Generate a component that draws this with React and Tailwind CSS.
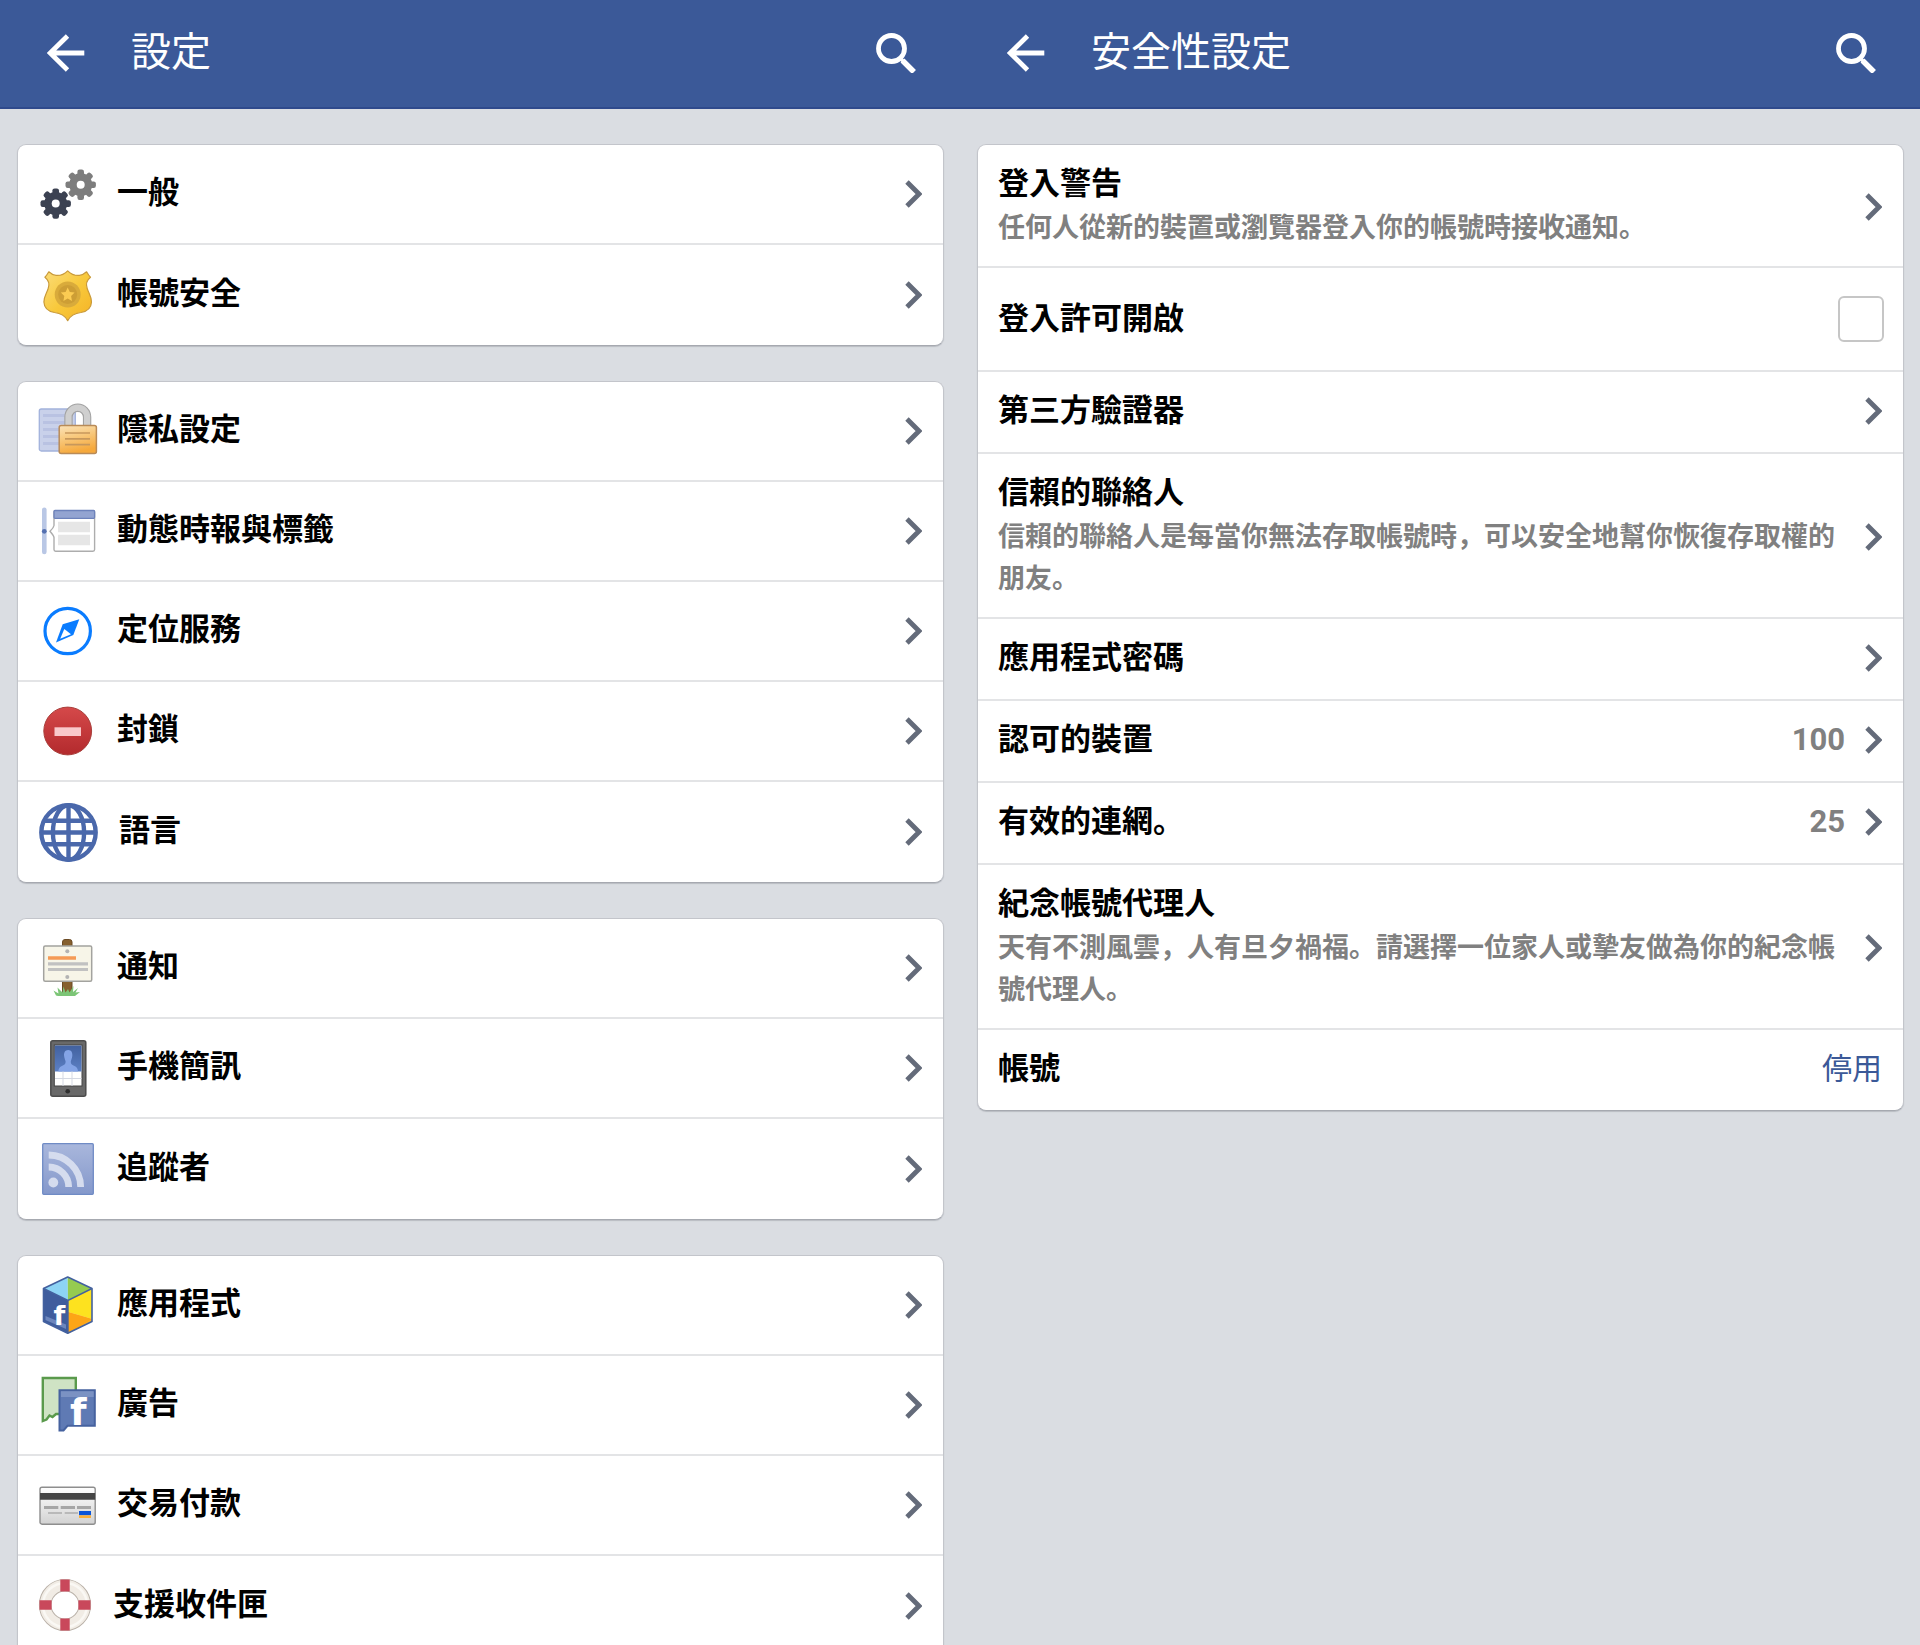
import React, { useState } from 'react';

const GEAR_ANGLES = [0, 45, 90, 135];

const Gear = ({ cx, cy, fill }) => (
    <g fill={fill}>
        <circle cx={cx} cy={cy} r="11.5" />
        {GEAR_ANGLES.map((angle) => (
            <rect
                key={angle}
                x={cx - 3.3}
                y={cy - 15.2}
                width="6.6"
                height="30.4"
                rx="2.2"
                transform={`rotate(${angle} ${cx} ${cy})`}
            />
        ))}
        <circle cx={cx} cy={cy} r="4" fill="#fff" />
    </g>
);

const Icon = ({ className = 'w-14 h-14', viewBox = '0 0 56 56', children }) => (
    <svg className={`${className} shrink-0 overflow-visible`} viewBox={viewBox} fill="none" aria-hidden="true">
        {children}
    </svg>
);

const GearsIcon = () => (
    <Icon>
        <Gear cx={41.7} cy={18.7} fill="#7d7d7d" />
        <Gear cx={16.7} cy={37.6} fill="#3c4252" />
    </Icon>
);

const BadgeIcon = () => (
    <Icon>
        <defs>
            <linearGradient id="badge" x1="0" y1="0" x2="1" y2="1">
                <stop offset="0" stopColor="#fbdc7a" />
                <stop offset="0.5" stopColor="#f8c93c" />
                <stop offset="1" stopColor="#f5b325" />
            </linearGradient>
        </defs>
        <path
            d="M28.7 3.8C25.5 7 21 8.8 17 8.4C14.2 8.2 12 6.8 9.8 4.8C8.8 6.6 7.5 8.7 5.9 10.2C9.5 13 10.8 17 9.2 21.5C7.5 26.5 4.9 29.5 4.9 35C5.2 41 9.5 44.5 15.5 45.5C21.5 46.3 26 48.5 28.7 53.6C31.4 48.5 35.9 46.3 41.9 45.5C47.9 44.5 52.2 41 52.5 35C52.5 29.5 49.9 26.5 48.2 21.5C46.6 17 47.9 13 51.5 10.2C49.9 8.7 48.6 6.6 47.6 4.8C45.4 6.8 43.2 8.2 40.4 8.4C36.4 8.8 31.9 7 28.7 3.8Z"
            fill="url(#badge)"
            stroke="#c99a3a"
            strokeWidth="1.2"
            strokeLinejoin="round"
        />
        <circle cx="28.7" cy="27.5" r="13" fill="#d9ab3b" />
        <circle cx="28.7" cy="27.5" r="9.5" fill="#cd9e35" />
        <path d="M28.7 20.5L30.8 25L35.6 25.6L32.1 29L33 33.9L28.7 31.5L24.4 33.9L25.3 29L21.8 25.6L26.6 25Z" fill="#fbcb52" />
    </Icon>
);

const PrivacyIcon = () => (
    <Icon>
        <defs>
            <linearGradient id="lockBody" x1="0" y1="0" x2="0.3" y2="1">
                <stop offset="0" stopColor="#fbe3ba" />
                <stop offset="0.45" stopColor="#f8ca80" />
                <stop offset="1" stopColor="#f6a93c" />
            </linearGradient>
        </defs>
        <rect x="0.3" y="6" width="36" height="42" rx="2" fill="#c9d1ea" stroke="#a2b2dc" strokeWidth="1.3" />
        <path d="M4 12.5H30M4 19.5H30M4 26.5H30M4 33.5H30M4 40.5H30" stroke="#b9c2e2" strokeWidth="3" />
        <path d="M29.5 23V14A9.3 9.3 0 0 1 48.1 14V23" stroke="#a3a3a3" strokeWidth="8.4" />
        <path d="M29.5 23V14A9.3 9.3 0 0 1 48.1 14V23" stroke="#cfcfcf" strokeWidth="6.2" />
        <rect x="20.2" y="22.5" width="37.2" height="28" rx="2" fill="url(#lockBody)" stroke="#b98b58" strokeWidth="1.5" />
        <path d="M26 30H51M26 35.8H51M26 41.6H51" stroke="#c7985c" strokeWidth="1.7" />
    </Icon>
);

const TimelineIcon = () => (
    <Icon>
        <path d="M5.3 6.8V49" stroke="#b9c7e5" strokeWidth="4.6" strokeLinecap="round" />
        <circle cx="5.3" cy="28.3" r="2.4" fill="#5470b0" />
        <path
            d="M16.3 7.7H54.3Q55.6 7.7 55.6 9V46.5Q55.6 48.2 53.9 48.2H16.6Q15 48.2 15 46.5V34.5Q14.6 32.5 11 28.3Q14.6 25 15 22.5V9Q15 7.7 16.3 7.7Z"
            fill="#fff"
            stroke="#adadad"
            strokeWidth="1.4"
        />
        <rect x="15" y="7.5" width="40.6" height="7.8" rx="1" fill="#93a4d1" stroke="#6d82bb" strokeWidth="1.3" />
        <path d="M19 18.8H51V29.3H19ZM19 31.8H51V42.3H19Z" fill="#e6e6e6" />
    </Icon>
);

const CompassIcon = () => (
    <Icon>
        <circle cx="28.7" cy="28" r="22.7" stroke="#0a7cff" strokeWidth="3.2" />
        <path d="M40.3 16.3L23.7 21.3L17 39.5L34.3 32Z" fill="#0a7cff" />
        <path d="M25.3 26L32 31.3L21.2 35.8Z" fill="#fff" />
    </Icon>
);

const BlockIcon = () => (
    <Icon>
        <defs>
            <linearGradient id="block" x1="0" y1="0" x2="0" y2="1">
                <stop offset="0" stopColor="#d5494a" />
                <stop offset="1" stopColor="#b32a2d" />
            </linearGradient>
        </defs>
        <circle cx="28.7" cy="28" r="23.9" fill="url(#block)" stroke="#a9403c" strokeWidth="1" />
        <path d="M15.5 24.3H42V33H15.5Z" fill="#f9c8ca" />
    </Icon>
);

const GlobeIcon = () => (
    <Icon className="w-[58px] h-[58px]" viewBox="0 0 58 58">
        <g stroke="#4a68ab" strokeWidth="4.4">
            <circle cx="29.5" cy="29.5" r="27.2" />
            <ellipse cx="29.5" cy="29.5" rx="15.6" ry="27.2" />
            <path d="M29.5 2V57M2 29.5H57M5.5 17.7H53.5M5.5 41.3H53.5" />
        </g>
    </Icon>
);

const NoticeIcon = () => (
    <Icon>
        <path d="M23.5 54V2Q23.5 -0.5 26 -0.5H30.5Q33 -0.5 33 2V54Z" fill="#86602f" stroke="#6b4a24" />
        <rect x="4.7" y="6" width="48" height="35.3" rx="1.5" fill="#f7f5e8" stroke="#a3a39f" strokeWidth="1.5" />
        <path d="M9 18H37" stroke="#f59a56" strokeWidth="3.6" />
        <path d="M9 23.8H49M9 29.5H49" stroke="#c1c1c1" strokeWidth="3.2" />
        <circle cx="28.3" cy="11.3" r="2" fill="#b3b3b3" />
        <circle cx="28.3" cy="37" r="2" fill="#b3b3b3" />
        <path
            d="M17 55.5L14.5 50.5L19.5 53.5L18.5 47.5L23.5 52.5L24.5 46.5L26.5 52.5L29 49L30.5 52.5L34.5 46L34 52L39 48L36.5 52.5L41 52L36 56H19Z"
            fill="#7cc576"
        />
    </Icon>
);

const PhoneIcon = () => (
    <Icon>
        <defs>
            <linearGradient id="screen" x1="0" y1="0" x2="0" y2="1">
                <stop offset="0" stopColor="#42619f" />
                <stop offset="1" stopColor="#5c80c4" />
            </linearGradient>
        </defs>
        <rect x="11.8" y="0.8" width="35" height="55.5" rx="2" fill="#696969" stroke="#4c4c4c" strokeWidth="1.5" />
        <rect x="15.3" y="5" width="27.7" height="41" fill="#fff" stroke="#454545" />
        <rect x="15.8" y="5.5" width="26.7" height="26" fill="url(#screen)" />
        <path
            d="M29.2 10C32.5 10 33.7 12.8 33.3 16C33 18.8 32 20 31.8 21.5C31.7 23.5 32.5 24.5 34.5 25.5C37.5 26.8 38.8 28 39 31.5H19.4C19.6 28 20.9 26.8 23.9 25.5C25.9 24.5 26.7 23.5 26.6 21.5C26.4 20 25.4 18.8 25.1 16C24.7 12.8 25.9 10 29.2 10Z"
            fill="#84a4e6"
        />
        <path d="M24 31.5V46M33 31.5V46M16 38.5H42.5" stroke="#d5d9e3" />
        <circle cx="28.7" cy="51.3" r="2.3" fill="#2e2e2e" />
    </Icon>
);

const FollowersIcon = () => (
    <Icon>
        <defs>
            <linearGradient id="feed" x1="0" y1="0" x2="0" y2="1">
                <stop offset="0" stopColor="#a9b7dc" />
                <stop offset="1" stopColor="#8498cb" />
            </linearGradient>
        </defs>
        <rect x="3.7" y="2.7" width="50.6" height="50.6" rx="1" fill="url(#feed)" stroke="#6f8bc5" strokeWidth="1.3" />
        <g stroke="#d5dcee" strokeWidth="6.8">
            <path d="M9.7 26A20 20 0 0 1 29.7 46" />
            <path d="M9.7 14A32 32 0 0 1 41.7 46" />
        </g>
        <circle cx="14.3" cy="41.5" r="4.9" fill="#d5dcee" />
    </Icon>
);

const AppsIcon = () => (
    <Icon>
        <path d="M28.7 0L4.5 11.5L29 23.5Z" fill="#8dd4f5" />
        <path d="M28.7 0L53 11.5L29 23.5Z" fill="#95cb50" />
        <path d="M29 23.5L53 11.5V42L29 35Z" fill="#fde21f" />
        <path d="M29 35L53 42V44.5L29 56.5Z" fill="#fcb026" />
        <path d="M29 35L53 42L29 56.5Z" fill="#fda516" />
        <path d="M4.5 11.5L29 23.5V56.5L4.5 44.5Z" fill="#3f5d9d" />
        <path d="M6.5 39L27 47.5V52L6.5 43Z" fill="#6c86bd" />
        <path d="M28.7 0L53 11.5V44.5L28.7 56.3L4.5 44.5V11.5Z" stroke="#43619f" strokeWidth="1.6" strokeLinejoin="round" />
        <path d="M4.5 11.5L29 23.5L53 11.5M29 23.5V56" stroke="#43619f" strokeWidth="1.4" />
        <text x="14.5" y="47.5" fill="#fff" fontFamily="DejaVu Sans, sans-serif" fontWeight="700" fontSize="27">f</text>
    </Icon>
);

const AdsIcon = () => (
    <Icon>
        <path d="M4 1H36.8V37H17L13.5 40L10.5 38.5L7.5 42.5L3.8 44V1Z" fill="#cfe3c4" stroke="#5a9a4c" strokeWidth="2.4" />
        <path d="M21 13.2H55.8V48.8H28.5L24.5 53.5H20.5V13.2Z" fill="#5f7ab4" stroke="#46629f" strokeWidth="2" />
        <path d="M22 14.3H54.7V20H22Z" fill="#7b92c3" />
        <text x="31" y="47.8" fill="#fff" fontFamily="DejaVu Sans, sans-serif" fontWeight="700" fontSize="38">f</text>
    </Icon>
);

const PaymentIcon = () => (
    <Icon>
        <defs>
            <linearGradient id="card" x1="0" y1="0" x2="0" y2="1">
                <stop offset="0" stopColor="#ffffff" />
                <stop offset="1" stopColor="#d2d2d2" />
            </linearGradient>
        </defs>
        <rect x="1" y="10.2" width="55.2" height="37" rx="2" fill="url(#card)" stroke="#8e8e8e" strokeWidth="1.4" />
        <path d="M1 16H56.2V22.7H1Z" fill="#454545" />
        <path d="M5 30.5H19.3M21.7 30.5H36M38 30.5H52" stroke="#a6a6a6" strokeWidth="3.2" />
        <path d="M9 36H23M25.7 36H39" stroke="#b9b9b9" strokeWidth="2.2" />
        <path d="M40 34H52V38.3H40Z" fill="#0b55d8" />
        <path d="M40 38.3H52V41H40Z" fill="#fbb03b" />
    </Icon>
);

const SupportIcon = () => (
    <Icon className="w-[52px] h-[52px]" viewBox="0 0 52 52">
        <circle cx="26" cy="25" r="19.8" stroke="#b9b1a8" strokeWidth="12.6" />
        <circle cx="26" cy="25" r="19.8" stroke="#f1ece5" strokeWidth="10.8" />
        <circle cx="26" cy="25" r="22" stroke="#faf8f4" strokeWidth="2.5" />
        <path d="M26 -0.5V11.6M26 38.4V50.5M0.5 25H12.6M39.4 25H51.5" stroke="#c9485b" strokeWidth="9.4" />
    </Icon>
);

const ArrowLeft = () => (
    <svg className="w-[38px] h-[38px]" viewBox="0 0 38 38" fill="none" aria-hidden="true">
        <path d="M20.5 2L3.2 19L20.5 36M3.2 19H37.3" stroke="#fff" strokeWidth="4.8" />
    </svg>
);

const SearchGlass = () => (
    <svg className="w-10 h-10" viewBox="0 0 40 40" fill="none" stroke="#fff" aria-hidden="true">
        <circle cx="15.5" cy="15.5" r="13" strokeWidth="4.8" />
        <path d="M26.5 27.5L38 39" strokeWidth="5.5" />
        <path d="M24 25L28 29" strokeWidth="3.5" />
    </svg>
);

const Chevron = () => (
    <svg className="w-[17px] h-[28px] shrink-0" viewBox="0 0 17 28" fill="none" aria-hidden="true">
        <path d="M2 2L14 14L2 26" stroke="#646b7a" strokeWidth="4.8" />
    </svg>
);

const settingGroups = [
    [
        { label: '一般', icon: GearsIcon },
        { label: '帳號安全', icon: BadgeIcon },
    ],
    [
        { label: '隱私設定', icon: PrivacyIcon },
        { label: '動態時報與標籤', icon: TimelineIcon },
        { label: '定位服務', icon: CompassIcon },
        { label: '封鎖', icon: BlockIcon },
        { label: '語言', icon: GlobeIcon },
    ],
    [
        { label: '通知', icon: NoticeIcon },
        { label: '手機簡訊', icon: PhoneIcon },
        { label: '追蹤者', icon: FollowersIcon },
    ],
    [
        { label: '應用程式', icon: AppsIcon },
        { label: '廣告', icon: AdsIcon },
        { label: '交易付款', icon: PaymentIcon },
        { label: '支援收件匣', icon: SupportIcon },
    ],
];

const Screen = ({ title, children }) => (
    <section className="flex flex-1 min-w-0 flex-col">
        <header className="flex h-[109px] shrink-0 items-center border-b-2 border-[#2f4a8c] bg-[#3b5998] pb-[2px] pl-[47px] pr-[44px] text-white">
            <button type="button" aria-label="返回">
                <ArrowLeft />
            </button>
            <h1 className="ml-[46px] flex-1 text-[40px] leading-[48px] font-normal">{title}</h1>
            <button type="button" aria-label="搜尋">
                <SearchGlass />
            </button>
        </header>
        <main className="flex flex-1 min-h-0 flex-col gap-[35px] overflow-y-auto pt-[35px] pl-[17px] pr-4 pb-9 [scrollbar-width:none]">
            {children}
        </main>
    </section>
);

const Card = ({ children }) => (
    <div className="shrink-0 divide-y-2 divide-[#e3e4e6] overflow-hidden rounded-[9px] border border-[#c3c5cb] border-b-[#a6a9b0] bg-white shadow-[0_1px_1px_#b9bcc3]">
        {children}
    </div>
);

const SettingRow = ({ label, icon: RowIcon }) => (
    <button type="button" className="flex h-25 w-full items-center gap-[22px] px-[21px] text-left">
        <RowIcon />
        <span className="flex-1 pb-[2px] text-[31px] leading-10 font-bold">{label}</span>
        <Chevron />
    </button>
);

const SecurityRow = ({ label, detail, count }) => (
    <button
        type="button"
        className={`flex w-full items-center pt-[19px] pl-5 pr-[21px] text-left ${detail ? 'pb-[17px]' : 'pb-[21px]'}`}
    >
        <span className="flex-1 pr-5">
            <span className="block text-[31px] leading-10 font-bold">{label}</span>
            {detail && (
                <span className="mt-[3px] block text-[27px] leading-[42px] font-bold text-[#808080]">{detail}</span>
            )}
        </span>
        {count && <span className="mr-5 text-[31px] leading-10 font-bold text-[#808080]">{count}</span>}
        <Chevron />
    </button>
);

const App = () => {
    const [approvals, setApprovals] = useState(false);

    return (
        <div
            lang="ja"
            className="flex h-screen overflow-hidden bg-[#dadde2] font-[Roboto,'Noto_Sans_CJK_JP',sans-serif] text-black"
        >
            <Screen title="設定">
                {settingGroups.map((group, index) => (
                    <Card key={index}>
                        {group.map((item) => (
                            <SettingRow key={item.label} {...item} />
                        ))}
                    </Card>
                ))}
            </Screen>

            <Screen title="安全性設定">
                <Card>
                    <SecurityRow label="登入警告" detail="任何人從新的裝置或瀏覽器登入你的帳號時接收通知。" />
                    <div className="flex h-[104px] items-center pl-5 pr-[19px]">
                        <label htmlFor="approvals" className="flex-1 text-[31px] leading-10 font-bold">
                            登入許可開啟
                        </label>
                        <input
                            id="approvals"
                            type="checkbox"
                            checked={approvals}
                            onChange={(e) => setApprovals(e.target.checked)}
                            className="h-[46px] w-[46px] appearance-none rounded-md border-2 border-[#c6c6c6] bg-white checked:bg-[#3b5998]"
                        />
                    </div>
                    <SecurityRow label="第三方驗證器" />
                    <SecurityRow
                        label="信賴的聯絡人"
                        detail="信賴的聯絡人是每當你無法存取帳號時，可以安全地幫你恢復存取權的朋友。"
                    />
                    <SecurityRow label="應用程式密碼" />
                    <SecurityRow label="認可的裝置" count="100" />
                    <SecurityRow label="有效的連網。" count="25" />
                    <SecurityRow
                        label="紀念帳號代理人"
                        detail="天有不測風雲，人有旦夕禍福。請選擇一位家人或摯友做為你的紀念帳號代理人。"
                    />
                    <div className="flex items-center pt-[19px] pb-[21px] pl-5 pr-[21px] leading-10">
                        <span className="flex-1 text-[31px] font-bold">帳號</span>
                        <a href="#deactivate" className="text-[30px] text-[#3b5998]">停用</a>
                    </div>
                </Card>
            </Screen>
        </div>
    );
};

export default App;
